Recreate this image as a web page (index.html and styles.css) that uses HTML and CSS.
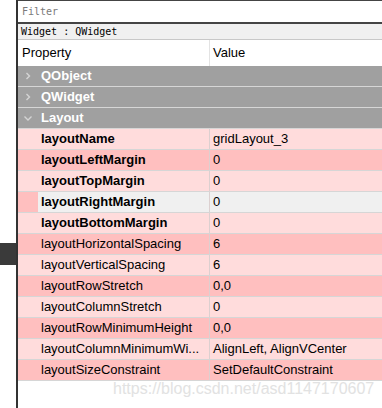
FILE: index.html
```html
<html>
<head>
<link rel="stylesheet" href="styles.css">
</head>
<body>
<div class="screen">
  <div class="gutter"><div class="gutter__mark"></div></div>

  <div class="panel">
    <div class="filter">Filter</div>
    <div class="object-name">Widget : QWidget</div>

    <div class="header">
      <div class="header__name">Property</div>
      <div class="header__value">Value</div>
    </div>

    <div class="tree">
      <div class="group">
        <svg class="group__arrow" width="20" height="20" viewBox="0 0 20 20" fill="none" stroke="#d4d4d4" stroke-width="1.4"><path d="M7.5 7L10.5 10L7.5 13"/></svg>
        <span>QObject</span>
      </div>
      <div class="group">
        <svg class="group__arrow" width="20" height="20" viewBox="0 0 20 20" fill="none" stroke="#d4d4d4" stroke-width="1.4"><path d="M7.5 7L10.5 10L7.5 13"/></svg>
        <span>QWidget</span>
      </div>
      <div class="group">
        <svg class="group__arrow" width="20" height="20" viewBox="0 0 20 20" fill="none" stroke="#d4d4d4" stroke-width="1.4"><path d="M5.5 8.5L9 12L12.5 8.5"/></svg>
        <span>Layout</span>
      </div>

      <div class="prop -light -changed">
        <div class="prop__name"><span class="prop__indent"></span><span class="prop__label">layoutName</span></div>
        <div class="prop__value">gridLayout_3</div>
      </div>
      <div class="prop -dark -changed">
        <div class="prop__name"><span class="prop__indent"></span><span class="prop__label">layoutLeftMargin</span></div>
        <div class="prop__value">0</div>
      </div>
      <div class="prop -light -changed">
        <div class="prop__name"><span class="prop__indent"></span><span class="prop__label">layoutTopMargin</span></div>
        <div class="prop__value">0</div>
      </div>
      <div class="prop -dark -changed -current">
        <div class="prop__name"><span class="prop__indent"></span><span class="prop__label">layoutRightMargin</span></div>
        <div class="prop__value">0</div>
      </div>
      <div class="prop -light -changed">
        <div class="prop__name"><span class="prop__indent"></span><span class="prop__label">layoutBottomMargin</span></div>
        <div class="prop__value">0</div>
      </div>
      <div class="prop -dark">
        <div class="prop__name"><span class="prop__indent"></span><span class="prop__label">layoutHorizontalSpacing</span></div>
        <div class="prop__value">6</div>
      </div>
      <div class="prop -light">
        <div class="prop__name"><span class="prop__indent"></span><span class="prop__label">layoutVerticalSpacing</span></div>
        <div class="prop__value">6</div>
      </div>
      <div class="prop -dark">
        <div class="prop__name"><span class="prop__indent"></span><span class="prop__label">layoutRowStretch</span></div>
        <div class="prop__value">0,0</div>
      </div>
      <div class="prop -light">
        <div class="prop__name"><span class="prop__indent"></span><span class="prop__label">layoutColumnStretch</span></div>
        <div class="prop__value">0</div>
      </div>
      <div class="prop -dark">
        <div class="prop__name"><span class="prop__indent"></span><span class="prop__label">layoutRowMinimumHeight</span></div>
        <div class="prop__value">0,0</div>
      </div>
      <div class="prop -light">
        <div class="prop__name"><span class="prop__indent"></span><span class="prop__label">layoutColumnMinimumWi...</span></div>
        <div class="prop__value">AlignLeft, AlignVCenter</div>
      </div>
      <div class="prop -dark">
        <div class="prop__name"><span class="prop__indent"></span><span class="prop__label">layoutSizeConstraint</span></div>
        <div class="prop__value">SetDefaultConstraint</div>
      </div>
    </div>

    <div class="watermark">https://blog.csdn.net/asd1147170607</div>
  </div>
</div>
</body>
</html>
```

FILE: styles.css
```css
/* reset */
* {
  padding: 0;
  margin: 0;
  box-sizing: border-box;
}

body {
  background-color: #fff;
  font-family: "Liberation Sans", Arial, sans-serif;
  font-size: 13px;
  color: #000;
}

.screen {
  width: 382px;
  height: 408px;
  overflow: hidden;
  display: flex;
}

.gutter {
  width: 16px;
  flex: none;
}

.gutter__mark {
  margin-top: 243px;
  height: 22px;
  background-color: #3a3a3a;
}

.panel {
  width: 366px;
  flex: none;
  border-left: 2px solid #333;
  display: flex;
  flex-direction: column;
}

/* top bars */
.filter {
  height: 24px;
  border-top: 1px solid #444;
  border-bottom: 2px solid #444;
  padding-left: 4px;
  line-height: 21px;
  font-family: "DejaVu Sans Mono", "Liberation Mono", monospace;
  font-size: 10px;
  color: #7a7a7a;
}

.object-name {
  height: 16px;
  background-color: #f0f0f0;
  border-bottom: 1px solid #c8c8c8;
  padding-left: 3px;
  line-height: 15px;
  font-family: "DejaVu Sans Mono", "Liberation Mono", monospace;
  font-size: 10px;
}

.header {
  height: 26px;
  display: flex;
  line-height: 26px;
}

.header__name {
  width: 192px;
  padding-left: 4px;
  border-right: 1px solid #e3e3e3;
}

.header__value {
  padding-left: 3px;
}

/* tree rows */
.group,
.prop {
  height: 21px;
  line-height: 20px;
  border-bottom: 1px solid #d6d6d6;
  display: flex;
}

.group {
  background-color: #a0a0a0;
  color: #fff;
  font-weight: bold;
  align-items: center;
}

.group__arrow {
  margin-left: 1px;
  margin-right: 2px;
}

.prop.-light {
  background-color: #ffdcdc;
}

.prop.-dark {
  background-color: #ffbfbf;
}

.prop.-changed .prop__label {
  font-weight: bold;
}

.prop__name {
  width: 192px;
  display: flex;
  border-right: 1px solid #dcd0d0;
}

.prop__indent {
  width: 20px;
  flex: none;
}

.prop__label {
  flex: 1;
  padding-left: 3px;
  white-space: nowrap;
  overflow: hidden;
}

.prop__value {
  flex: 1;
  padding-left: 3px;
  white-space: nowrap;
}

.prop.-current .prop__label,
.prop.-current .prop__value {
  background-color: #f0f0f0;
}

.watermark {
  padding-left: 95px;
  font-size: 16px;
  line-height: 16px;
  color: #e2e2e2;
  white-space: nowrap;
}
```
